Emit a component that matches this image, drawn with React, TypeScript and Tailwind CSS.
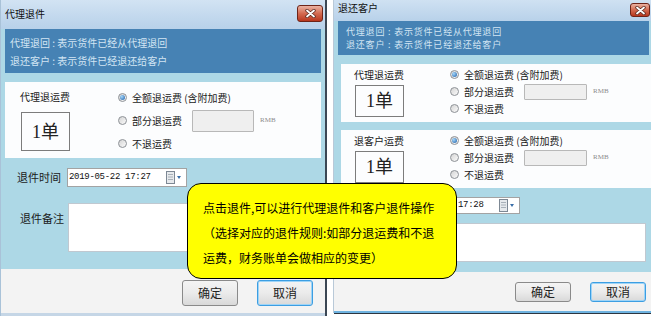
import React from "react";

const CloseBtn = ({ big }: { big?: boolean }) => (
  <div
    className={`${big ? "w-[26px] h-[17px]" : "w-[20px] h-[14px]"} rounded-[3px] border border-[#6e2418] bg-linear-to-b from-[#eab2a2] via-[#d36a50] to-[#b8361c] flex items-center justify-center`}
  >
    <svg width="11" height="9" viewBox="0 0 11 9">
      <path d="M2 1.5 L9 7.5 M9 1.5 L2 7.5" stroke="#5a2a20" strokeWidth="3.4" strokeLinecap="round" />
      <path d="M2 1.5 L9 7.5 M9 1.5 L2 7.5" stroke="#ffffff" strokeWidth="1.8" strokeLinecap="round" />
    </svg>
  </div>
);

const Radio = ({ checked }: { checked?: boolean }) => (
  <span className="w-[9px] h-[9px] rounded-full border border-[#8d9196] bg-linear-to-br from-[#d4d4d4] to-[#fbfbfb] flex items-center justify-center shrink-0">
    {checked && (
      <span className="w-[5px] h-[5px] rounded-full bg-[radial-gradient(circle_at_35%_35%,#a6d8fb,#1a5ba6)]" />
    )}
  </span>
);

const CalendarIcon = () => (
  <svg width="16" height="14" viewBox="0 0 16 14">
    <rect x="0.5" y="0.5" width="8" height="12" fill="#e6e9ec" stroke="#7d8894" />
    <path d="M2 3.5 H7 M2 6 H7 M2 8.5 H7" stroke="#a8b0b8" strokeWidth="1" />
    <path d="M11 5 L15 5 L13 8 Z" fill="#3a6ea8" />
  </svg>
);

const FeePanel = ({ title, compact }: { title: string; compact?: boolean }) => {
  const row = compact ? "h-[17px]" : "h-[23px]";
  return (
    <div
      className={
        compact
          ? "h-[58px] ml-[7px] bg-[#fcfdfe] flex"
          : "h-[76px] mx-[4px] bg-[#fcfdfe] flex"
      }
    >
      <div className={compact ? "pl-[13px] pt-[4px] w-[63px]" : "pl-[15px] pt-[8px] w-[65px]"}>
        <div className="text-[10px] leading-[14px] text-[#1a1a1a] whitespace-nowrap">{title}</div>
        <div
          className={`${compact ? "mt-[3px] h-[32px]" : "mt-[8px] h-[39px]"} ml-[1px] w-[49px] border border-[#7c7c7c] flex items-center justify-center text-[18px] leading-none text-[#222] font-['Liberation_Serif','Noto_Sans_CJK_SC',serif]`}
        >
          1单
        </div>
      </div>
      <div className={compact ? "ml-[46px] pt-[2px]" : "ml-[48px] pt-[4px]"}>
        <div className={`${row} flex items-center`}>
          <Radio checked />
          <span className="ml-[5px] text-[10px] text-[#1a1a1a] whitespace-nowrap">全额退运费 (含附加费)</span>
        </div>
        <div className={`${row} flex items-center`}>
          <Radio />
          <span className="ml-[5px] w-[60px] text-[10px] text-[#1a1a1a] whitespace-nowrap">部分退运费</span>
          <span
            className={`${compact ? "w-[63px] h-[16px]" : "w-[62px] h-[22px]"} bg-[#efefef] border border-[#b8b8b8] rounded-[1px]`}
          />
          <span className="ml-[6px] text-[7px] text-[#8c8c8c] font-['Liberation_Serif',serif]">RMB</span>
        </div>
        <div className={`${row} flex items-center`}>
          <Radio />
          <span className="ml-[5px] text-[10px] text-[#1a1a1a] whitespace-nowrap">不退运费</span>
        </div>
      </div>
    </div>
  );
};

const Info = ({ compact }: { compact?: boolean }) => (
  <div
    className={
      compact
        ? "h-[34px] ml-[4px] mr-[2px] bg-[#4682b4] pl-[8px] pt-[4px] text-[9px] tracking-[0.8px] leading-[13px] text-[#d2e5f3]"
        : "h-[44px] mx-[4px] bg-[#4682b4] pl-[5px] pt-[5px] text-[10px] leading-[18px] text-[#d2e5f3]"
    }
  >
    <div>代理退回 : 表示货件已经从代理退回</div>
    <div>退还客户 : 表示货件已经退还给客户</div>
  </div>
);

const Btn = ({ label, focus, compact }: { label: string; focus?: boolean; compact?: boolean }) => (
  <div
    className={`${compact ? "h-[20px]" : "h-[26px]"} w-[56px] rounded-[3px] border ${
      focus ? "border-[#3c9ee2] shadow-[inset_0_0_0_1px_#9ed4f7]" : "border-[#8a8a8a]"
    } bg-linear-to-b from-[#f4f4f4] via-[#ebebeb] to-[#d9d9d9] flex items-center justify-center text-[12px] text-[#222]`}
  >
    {label}
  </div>
);

const LeftWindow = () => (
  <div className="w-[327px] h-[316px] shrink-0 flex flex-col bg-[#add8e6] border-l border-[#a9c2d8] border-r-2 border-r-[#3b4754]">
    <div className="h-[27px] shrink-0 bg-linear-to-b from-[#d2e3f3] to-[#b9d2ea] flex items-center justify-between pl-[4px] pr-[2px]">
      <span className="text-[10px] text-[#111]">代理退件</span>
      <CloseBtn big />
    </div>
    <div className="h-[2px] bg-[#b9d2ea]" />
    <Info />
    <div className="h-[9px]" />
    <FeePanel title="代理退运费" />
    <div className="mt-[10px] h-[19px] flex items-center">
      <span className="pl-[16px] w-[66px] text-[11px] text-[#1a1a1a]">退件时间</span>
      <div className="w-[120px] h-[19px] bg-white border border-[#a3a3a3] flex items-center pl-[1px]">
        <span className="w-[97px] text-[9px] tracking-[-0.3px] text-[#111] font-['Liberation_Mono',monospace] whitespace-nowrap">
          2019-05-22 17:27
        </span>
        <CalendarIcon />
      </div>
    </div>
    <div className="mt-[16px] h-[49px] flex">
      <span className="pl-[19px] w-[67px] pt-[7px] text-[11px] text-[#1a1a1a]">退件备注</span>
      <div className="w-[245px] h-[49px] bg-white border border-[#c0c8d0]" />
    </div>
    <div className="flex-1" />
    <div className="h-[47px] shrink-0 bg-[#f3f3f3] flex items-start pt-[11px] pl-[181px] gap-[19px] border-b-[3px] border-[#c5d6e6]">
      <Btn label="确定" />
      <Btn label="取消" focus />
    </div>
  </div>
);

const RightWindow = () => (
  <div className="w-[318px] h-[313px] shrink-0 flex flex-col bg-[#add8e6] border-l border-[#b9c9d8]">
    <div className="h-[20px] shrink-0 bg-linear-to-b from-[#cfe1f2] to-[#b9d2ea] flex items-center justify-between pl-[4px] pr-[1px]">
      <span className="text-[10px] text-[#111] -mt-[5px]">退还客户</span>
      <CloseBtn />
    </div>
    <div className="h-[1px] bg-[#b9d2ea]" />
    <Info compact />
    <div className="h-[9px]" />
    <FeePanel title="代理退运费" compact />
    <div className="h-[8px]" />
    <FeePanel title="退客户运费" compact />
    {/* label and date prefix sit under the yellow note */}
    <div className="mt-[9px] h-[17px] flex items-center">
      <span className="w-[66px]" />
      <div className="w-[120px] h-[17px] bg-white border border-[#a3a3a3] flex items-center">
        <span className="w-[98px] pl-[57px] text-[9px] tracking-[-0.3px] text-[#111] font-['Liberation_Mono',monospace] whitespace-nowrap">
          17:28
        </span>
        <CalendarIcon />
      </div>
    </div>
    <div className="mt-[9px] h-[39px] flex">
      <span className="w-[67px]" />
      <div className="w-[245px] h-[39px] bg-white border border-[#c0c8d0]" />
    </div>
    <div className="flex-1" />
    <div className="h-[41px] shrink-0 bg-[#f3f3f3] flex items-start pt-[10px] pl-[181px] gap-[19px] border-b-2 border-[#6fb3e0] shadow-[0_1px_0_#2c3640]">
      <Btn label="确定" compact />
      <Btn label="取消" focus compact />
    </div>
  </div>
);

export default function App() {
  return (
    <div className="relative w-[652px] h-[318px] bg-white overflow-hidden font-['Noto_Sans_CJK_SC',sans-serif]">
      <div className="flex gap-[6px]">
        <LeftWindow />
        <RightWindow />
      </div>
      <div className="absolute left-[187px] top-[183px] w-[270px] h-[96px] rounded-[14px] border border-black bg-[#ffff00] pl-[15px] pt-[11px] text-[12px] leading-[25px] text-black whitespace-nowrap z-10">
        <div>点击退件,可以进行代理退件和客户退件操作</div>
        <div>（选择对应的退件规则:如部分退运费和不退</div>
        <div>运费，财务账单会做相应的变更）</div>
      </div>
    </div>
  );
}
